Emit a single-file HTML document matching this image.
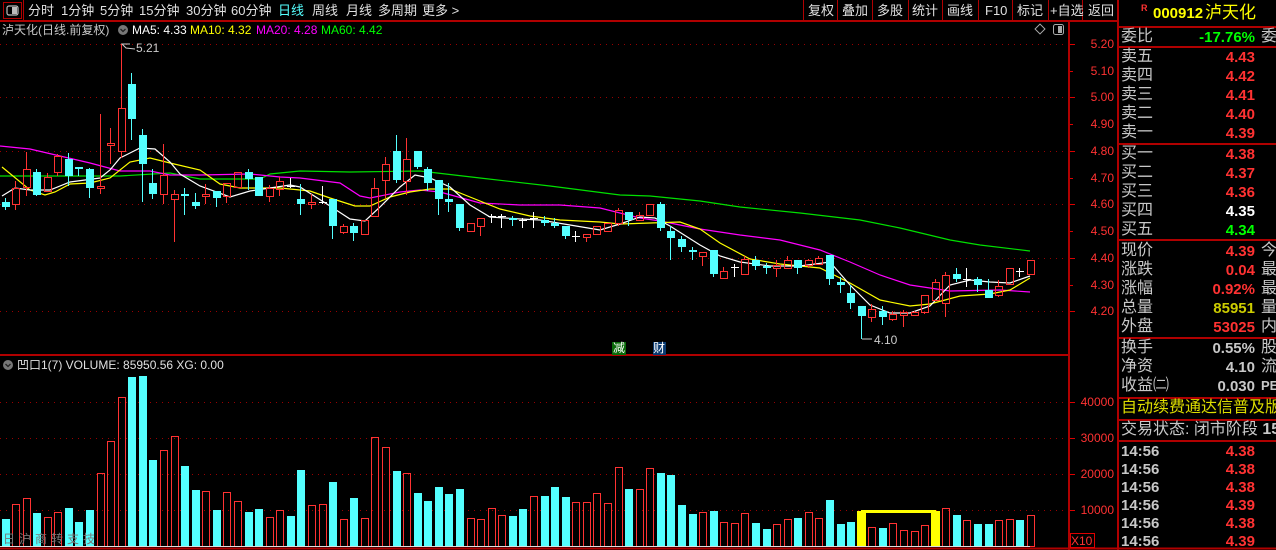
<!DOCTYPE html>
<html><head><meta charset="utf-8">
<style>
*{margin:0;padding:0;box-sizing:border-box}
body{width:1276px;height:550px;background:#000;overflow:hidden;position:relative;font-family:"Liberation Sans","Noto Sans CJK SC",sans-serif;color:#c8c8c8}
.t{position:absolute;white-space:nowrap;line-height:1}
.tb{font-size:13px;top:4px;color:#e0e0e0}
.rp{position:absolute;left:1121px;font-size:16px;color:#c8c8c8;white-space:nowrap;line-height:1}
.v{position:absolute;right:21px;font-size:15px;font-weight:bold;white-space:nowrap;line-height:1}
.s{position:absolute;left:1261px;font-size:16px;color:#c8c8c8;line-height:1}
.hl{position:absolute;left:1119px;width:157px;height:2px;background:#b00000}
</style></head><body>
<svg id="g" width="1276" height="550" style="position:absolute;left:0;top:0">
<g stroke="#b00000" stroke-width="2" fill="none">
<line x1="0" y1="21" x2="1118" y2="21"/>
<line x1="0" y1="355" x2="1069" y2="355"/>
<line x1="0" y1="548.5" x2="1276" y2="548.5"/>
<line x1="1069" y1="21" x2="1069" y2="550"/>
<line x1="1118" y1="0" x2="1118" y2="550"/>
</g>
<g stroke="#b00000" stroke-width="1">
<line x1="23.5" y1="0" x2="23.5" y2="21"/>
<line x1="803.5" y1="0" x2="803.5" y2="21"/><line x1="837.5" y1="0" x2="837.5" y2="21"/><line x1="872.5" y1="0" x2="872.5" y2="21"/><line x1="908.5" y1="0" x2="908.5" y2="21"/><line x1="942.5" y1="0" x2="942.5" y2="21"/><line x1="978.5" y1="0" x2="978.5" y2="21"/><line x1="1012.5" y1="0" x2="1012.5" y2="21"/><line x1="1048.5" y1="0" x2="1048.5" y2="21"/><line x1="1082.5" y1="0" x2="1082.5" y2="21"/>
<rect x="3.5" y="2.5" width="18" height="16" fill="none"/>
</g>
<rect x="7" y="6" width="11" height="9" rx="2" fill="none" stroke="#bbb" stroke-width="1.2"/><rect x="12" y="7" width="5" height="7" fill="#bbb"/>
<g stroke="#900" stroke-width="1" stroke-dasharray="1 5">
<line x1="0" y1="44.5" x2="1068" y2="44.5"/><line x1="0" y1="97.5" x2="1068" y2="97.5"/><line x1="0" y1="151.5" x2="1068" y2="151.5"/><line x1="0" y1="204.5" x2="1068" y2="204.5"/><line x1="0" y1="258.5" x2="1068" y2="258.5"/><line x1="0" y1="311.5" x2="1068" y2="311.5"/>
<line x1="0" y1="402.5" x2="1068" y2="402.5"/><line x1="0" y1="438.5" x2="1068" y2="438.5"/><line x1="0" y1="474.5" x2="1068" y2="474.5"/><line x1="0" y1="510.5" x2="1068" y2="510.5"/>
</g>
<g stroke="#d00" stroke-width="1">
<line x1="1070" y1="44.5" x2="1075" y2="44.5"/><line x1="1070" y1="71.5" x2="1073" y2="71.5"/><line x1="1070" y1="97.5" x2="1075" y2="97.5"/><line x1="1070" y1="124.5" x2="1073" y2="124.5"/><line x1="1070" y1="151.5" x2="1075" y2="151.5"/><line x1="1070" y1="178.5" x2="1073" y2="178.5"/><line x1="1070" y1="204.5" x2="1075" y2="204.5"/><line x1="1070" y1="231.5" x2="1073" y2="231.5"/><line x1="1070" y1="258.5" x2="1075" y2="258.5"/><line x1="1070" y1="285.5" x2="1073" y2="285.5"/><line x1="1070" y1="311.5" x2="1075" y2="311.5"/>
<line x1="1070" y1="402.5" x2="1075" y2="402.5"/><line x1="1070" y1="438.5" x2="1075" y2="438.5"/><line x1="1070" y1="474.5" x2="1075" y2="474.5"/><line x1="1070" y1="510.5" x2="1075" y2="510.5"/>
<rect x="1070.5" y="533.5" width="24" height="14" fill="none"/>
</g>
<g fill="none" stroke-width="1.2">
<polyline stroke="#00e000" points="0,176 120,176 170,173 200,179 260,179 270,174 300,171 350,172 420,171 480,178 550,186 620,195 650,196 700,201 740,207 800,213 860,220 900,228 950,240 980,245 1030,251"/>
<polyline stroke="#ff00ff" points="0,146 30,149 60,156 90,163 120,171 150,171 170,175 200,175 250,174 280,177 300,178 340,183 360,196 370,198 400,192 420,190 440,192 480,203 520,205 560,205 600,208 640,218 660,221 700,229 740,235 780,240 820,250 850,262 880,275 910,285 950,291 1000,290 1030,292"/>
<polyline stroke="#ffff00" points="2,167 30,190 45,195 55,192 70,184 90,183 110,178 130,162 150,158 170,163 200,170 220,184 240,188 280,188 310,191 330,198 355,206 370,206 390,197 410,192 430,189 450,189 470,197 500,209 530,216 560,220 600,222 620,224 650,223 680,222 700,229 720,243 750,259 780,264 820,268 850,283 880,300 910,306 930,304 960,296 990,294 1010,290 1030,278"/>
<polyline stroke="#ffffff" points="2,196 15,188 30,190 50,190 70,182 100,178 110,170 120,158 140,148 155,149 170,162 180,174 200,186 230,197 250,191 270,188 290,185 300,187 330,206 350,219 365,221 380,207 400,187 415,175 430,178 450,187 470,205 490,217 520,219 540,220 570,225 600,230 620,224 640,217 655,218 670,226 700,245 720,256 740,262 770,266 800,266 830,262 850,285 870,305 890,313 910,313 930,306 950,285 970,280 990,282 1010,283 1030,276"/>
</g>
<g id="cand"></g>
<g id="vol"></g>
<line x1="0" y1="546.5" x2="1030" y2="546.5" stroke="#ddd" stroke-width="1"/>
<g fill="#ff0" >
<rect x="857" y="511" width="9" height="35"/><rect x="931" y="511" width="9" height="35"/><rect x="861" y="510" width="75" height="3"/>
</g>
<polyline points="130,44 122,44 126,48 135,49" fill="none" stroke="#ccc" stroke-width="1"/>
<polyline points="862,339 872,339" fill="none" stroke="#ccc"/>
<circle cx="123" cy="30" r="5" fill="#777"/><polyline points="120.5,29 123,31.5 125.5,29" fill="none" stroke="#222" stroke-width="1.3"/>
<circle cx="8" cy="365" r="5" fill="#777"/><polyline points="5.5,364 8,366.5 10.5,364" fill="none" stroke="#222" stroke-width="1.3"/>
<rect x="1036.5" y="25.5" width="7" height="7" transform="rotate(45 1040 29)" fill="none" stroke="#aaa"/>
<rect x="1053.5" y="24.5" width="10" height="10" rx="2" fill="none" stroke="#aaa"/><rect x="1058" y="26" width="4" height="7" fill="#aaa"/>
<rect x="612" y="342" width="14" height="13" fill="#0a6a0a"/><rect x="653" y="342" width="13" height="13" fill="#0a3a70"/>
</svg>
<script>
(function(){
var C=[["c",202,207,198,210],["r",188,204,181,210],["r",169,187,152,196],["c",172,195,169,196],["r",177,191,173,191],["r",156,172,154,176],["c",159,176,153,186],["c",167,169,167,176],["c",169,188,168,198],["r",186,188,114,194],["r",143,145,128,164],["r",108,151,44,158],["c",84,119,73,140],["c",135,164,129,202],["c",183,194,169,199],["r",175,194,144,204],["r",194,199,190,242],["c",194,196,188,215],["c",202,206,193,209],["r",194,196,184,204],["c",191,198,191,207],["r",183,196,183,203],["r",172,187,172,187],["c",172,179,169,190],["c",177,196,177,196],["r",188,196,185,202],["r",181,189,177,196],["w",186,186,178,188],["c",199,204,184,215],["r",202,204,194,209],["w",202,202,186,204],["c",199,226,199,239],["r",226,232,224,234],["c",226,233,223,241],["r",220,234,220,234],["r",188,216,178,216],["r",164,180,157,198],["c",151,180,135,183],["r",159,181,138,195],["c",151,167,151,169],["c",169,183,167,191],["c",180,199,180,215],["c",199,202,183,212],["c",204,228,204,231],["r",223,231,223,231],["r",218,226,218,236],["w",216,216,214,223],["w",216,216,214,228],["c",218,220,216,226],["w",220,220,218,228],["w",218,218,212,228],["c",220,223,216,226],["c",223,226,218,228],["c",226,236,226,239],["w",236,236,231,242],["r",234,237,234,242],["r",226,234,226,234],["r",223,231,223,231],["r",210,223,208,226],["c",212,220,212,226],["r",215,220,212,220],["r",204,215,204,215],["c",204,228,202,231],["c",231,238,226,260],["c",239,247,236,252],["c",250,252,247,260],["r",252,256,252,266],["c",250,274,250,277],["r",271,278,267,279],["w",267,267,264,277],["r",259,274,256,274],["c",260,266,256,270],["c",266,268,263,274],["r",265,268,260,277],["r",260,268,256,268],["c",260,268,260,274],["r",260,265,259,268],["r",258,264,256,264],["c",255,279,255,285],["c",282,285,277,293],["c",293,303,285,309],["c",306,316,306,339],["r",309,317,304,322],["c",311,317,306,325],["r",314,319,311,321],["r",312,315,310,327],["r",312,315,311,315],["r",295,312,295,314],["r",282,300,279,301],["r",275,303,272,317],["c",274,279,268,282],["w",279,279,268,287],["c",279,285,277,292],["c",290,298,279,298],["r",286,295,280,297],["r",268,284,268,284],["w",271,271,268,277],["r",260,274,260,274]];
var V="c519 r504 r498 c513 r517 r512 c508 c522 c510 r473 r441 r397 c377 c376 c460 r450 r436 c466 c490 r491 c510 r492 r501 c512 c509 r517 r510 c516 c470 r505 r504 c482 r519 c498 r518 r437 r447 c471 r473 c493 c501 c487 c494 c489 r518 r519 r508 r515 c516 c509 r496 c496 c487 c497 r502 r502 r493 r503 r467 c489 r489 r468 c473 c475 c505 c514 r512 c511 r522 r523 r513 c523 c529 r524 r519 c518 r512 r518 c500 c524 c522 y511 r527 c528 r523 r530 r531 r525 y511 r508 c515 r520 c524 c524 r520 r519 c520 r515".split(" ");
var s="",v="",R="#ff3232",CY="#54ffff";
for(var i=0;i<C.length;i++){var d=C[i],x=Math.round(4.5+i*10.57);
 if(d[0]=="c"){s+='<line x1="'+(x+.5)+'" y1="'+d[3]+'" x2="'+(x+.5)+'" y2="'+d[4]+'" stroke="'+CY+'"/><rect x="'+(x-3)+'" y="'+d[1]+'" width="8" height="'+Math.max(2,d[2]-d[1])+'" fill="'+CY+'"/>';}
 else if(d[0]=="r"){var h=Math.max(2,d[2]-d[1]);s+='<line x1="'+(x+.5)+'" y1="'+d[3]+'" x2="'+(x+.5)+'" y2="'+d[1]+'" stroke="'+R+'"/><line x1="'+(x+.5)+'" y1="'+(d[1]+h)+'" x2="'+(x+.5)+'" y2="'+d[4]+'" stroke="'+R+'"/><rect x="'+(x-2.5)+'" y="'+(d[1]+.5)+'" width="7" height="'+h+'" fill="none" stroke="'+R+'"/>';}
 else{s+='<line x1="'+(x+.5)+'" y1="'+d[3]+'" x2="'+(x+.5)+'" y2="'+d[4]+'" stroke="#fff"/><line x1="'+(x-3)+'" y1="'+(d[1]+.5)+'" x2="'+(x+5)+'" y2="'+(d[1]+.5)+'" stroke="#fff"/>';}
 if(!V[i])continue;
 var tp=V[i].charAt(0),vt=parseInt(V[i].slice(1),10);
 if(tp=="c")v+='<rect x="'+(x-3)+'" y="'+vt+'" width="8" height="'+(546-vt)+'" fill="'+CY+'"/>';
 else if(tp=="r")v+='<rect x="'+(x-2.5)+'" y="'+(vt+.5)+'" width="7" height="'+(546-vt)+'" fill="none" stroke="'+R+'"/>';
}
document.getElementById("cand").innerHTML=s;document.getElementById("vol").innerHTML=v;
})();
</script>
<!-- toolbar -->
<div class="t tb" style="left:28px">分时</div>
<div class="t tb" style="left:61px">1分钟</div>
<div class="t tb" style="left:100px">5分钟</div>
<div class="t tb" style="left:139px">15分钟</div>
<div class="t tb" style="left:186px">30分钟</div>
<div class="t tb" style="left:231px">60分钟</div>
<div class="t tb" style="left:278px;color:#5ff">日线</div>
<div class="t tb" style="left:312px">周线</div>
<div class="t tb" style="left:346px">月线</div>
<div class="t tb" style="left:378px">多周期</div>
<div class="t tb" style="left:422px">更多 &gt;</div>
<div class="t tb" style="left:808px">复权</div>
<div class="t tb" style="left:842px">叠加</div>
<div class="t tb" style="left:877px">多股</div>
<div class="t tb" style="left:912px">统计</div>
<div class="t tb" style="left:947px">画线</div>
<div class="t tb" style="left:985px">F10</div>
<div class="t tb" style="left:1017px">标记</div>
<div class="t tb" style="left:1050px">+自选</div>
<div class="t tb" style="left:1088px">返回</div>
<!-- chart header -->
<div class="t" style="left:2px;top:24px;font-size:12px;color:#c8c8c8">泸天化(日线.前复权)</div>
<div class="t" style="left:132px;top:24px;font-size:12px;color:#fff">MA5: 4.33</div>
<div class="t" style="left:190px;top:24px;font-size:12px;color:#ff0">MA10: 4.32</div>
<div class="t" style="left:256px;top:24px;font-size:12px;color:#f0f">MA20: 4.28</div>
<div class="t" style="left:321px;top:24px;font-size:12px;color:#0f0">MA60: 4.42</div>
<div class="t" style="left:136px;top:42px;font-size:12px;color:#ccc">5.21</div>
<div class="t" style="left:874px;top:334px;font-size:12px;color:#ccc">4.10</div>
<div class="t" style="left:613px;top:342px;font-size:12px;color:#fff">减</div>
<div class="t" style="left:653px;top:342px;font-size:12px;color:#fff">财</div>
<div class="t" style="left:17px;top:359px;font-size:12px;color:#e0e0e0">凹口1(7) VOLUME: 85950.56 XG: 0.00</div>
<div class="t" style="left:3px;top:533px;font-size:12px;color:#777;letter-spacing:4px">日沪商转支技</div>
<!-- axis -->
<div style="position:absolute;left:1076px;top:0;width:38px;font-size:12px;color:#ff3232;text-align:right;line-height:1">
<div class="t" style="right:0;top:38px">5.20</div><div class="t" style="right:0;top:65px">5.10</div><div class="t" style="right:0;top:91px">5.00</div><div class="t" style="right:0;top:118px">4.90</div><div class="t" style="right:0;top:145px">4.80</div><div class="t" style="right:0;top:172px">4.70</div><div class="t" style="right:0;top:198px">4.60</div><div class="t" style="right:0;top:225px">4.50</div><div class="t" style="right:0;top:252px">4.40</div><div class="t" style="right:0;top:279px">4.30</div><div class="t" style="right:0;top:305px">4.20</div>
<div class="t" style="right:0;top:396px">40000</div><div class="t" style="right:0;top:432px">30000</div><div class="t" style="right:0;top:468px">20000</div><div class="t" style="right:0;top:504px">10000</div>
</div>
<div class="t" style="left:1071px;top:535px;font-size:12px;color:#ff3232">X10</div>
<!-- right panel -->
<div class="t" style="left:1141px;top:4px;font-size:9px;color:#ff3232;font-weight:bold">R</div>
<div class="t" style="left:1153px;top:6px;font-size:15px;color:#ff0;font-weight:bold">000912</div>
<div class="t" style="left:1205px;top:4px;font-size:17px;color:#ff0">泸天化</div>
<div class="hl" style="top:26px"></div>
<div class="rp" style="top:29px">委比</div><div class="v" style="top:30px;color:#0f0">-17.76%</div><div class="s" style="top:29px">委</div>
<div class="hl" style="top:46px"></div>
<div class="rp" style="top:49px">卖五</div><div class="v" style="top:50px;color:#ff3232">4.43</div>
<div class="rp" style="top:68px">卖四</div><div class="v" style="top:69px;color:#ff3232">4.42</div>
<div class="rp" style="top:87px">卖三</div><div class="v" style="top:88px;color:#ff3232">4.41</div>
<div class="rp" style="top:106px">卖二</div><div class="v" style="top:107px;color:#ff3232">4.40</div>
<div class="rp" style="top:125px">卖一</div><div class="v" style="top:126px;color:#ff3232">4.39</div>
<div class="hl" style="top:143px"></div>
<div class="rp" style="top:146px">买一</div><div class="v" style="top:147px;color:#ff3232">4.38</div>
<div class="rp" style="top:165px">买二</div><div class="v" style="top:166px;color:#ff3232">4.37</div>
<div class="rp" style="top:184px">买三</div><div class="v" style="top:185px;color:#ff3232">4.36</div>
<div class="rp" style="top:203px">买四</div><div class="v" style="top:204px;color:#fff">4.35</div>
<div class="rp" style="top:222px">买五</div><div class="v" style="top:223px;color:#0f0">4.34</div>
<div class="hl" style="top:239px"></div>
<div class="rp" style="top:243px">现价</div><div class="v" style="top:244px;color:#ff3232">4.39</div><div class="s" style="top:243px">今</div>
<div class="rp" style="top:262px">涨跌</div><div class="v" style="top:263px;color:#ff3232">0.04</div><div class="s" style="top:262px">最</div>
<div class="rp" style="top:281px">涨幅</div><div class="v" style="top:282px;color:#ff3232">0.92%</div><div class="s" style="top:281px">最</div>
<div class="rp" style="top:300px">总量</div><div class="v" style="top:301px;color:#cc0">85951</div><div class="s" style="top:300px">量</div>
<div class="rp" style="top:319px">外盘</div><div class="v" style="top:320px;color:#ff3232">53025</div><div class="s" style="top:319px">内</div>
<div class="hl" style="top:337px"></div>
<div class="rp" style="top:340px">换手</div><div class="v" style="top:341px;color:#c8c8c8">0.55%</div><div class="s" style="top:340px">股</div>
<div class="rp" style="top:359px">净资</div><div class="v" style="top:360px;color:#c8c8c8">4.10</div><div class="s" style="top:359px">流</div>
<div class="rp" style="top:378px">收益㈡</div><div class="v" style="top:379px;color:#c8c8c8">0.030</div><div class="s" style="top:379px;font-size:13px;font-weight:bold">PE</div>
<div class="hl" style="top:397px"></div>
<div class="rp" style="top:400px;color:#dd0">自动续费通达信普及版</div>
<div class="hl" style="top:419px"></div>
<div class="rp" style="top:422px">交易状态: 闭市阶段 <b>15</b></div>
<div class="hl" style="top:440px"></div>
<div class="rp" style="top:444px;font-weight:bold;font-size:15px">14:56</div><div class="v" style="top:444px;color:#ff3232">4.38</div>
<div class="rp" style="top:462px;font-weight:bold;font-size:15px">14:56</div><div class="v" style="top:462px;color:#ff3232">4.38</div>
<div class="rp" style="top:480px;font-weight:bold;font-size:15px">14:56</div><div class="v" style="top:480px;color:#ff3232">4.38</div>
<div class="rp" style="top:498px;font-weight:bold;font-size:15px">14:56</div><div class="v" style="top:498px;color:#ff3232">4.39</div>
<div class="rp" style="top:516px;font-weight:bold;font-size:15px">14:56</div><div class="v" style="top:516px;color:#ff3232">4.38</div>
<div class="rp" style="top:534px;font-weight:bold;font-size:15px">14:56</div><div class="v" style="top:534px;color:#ff3232">4.39</div>
</body></html>
